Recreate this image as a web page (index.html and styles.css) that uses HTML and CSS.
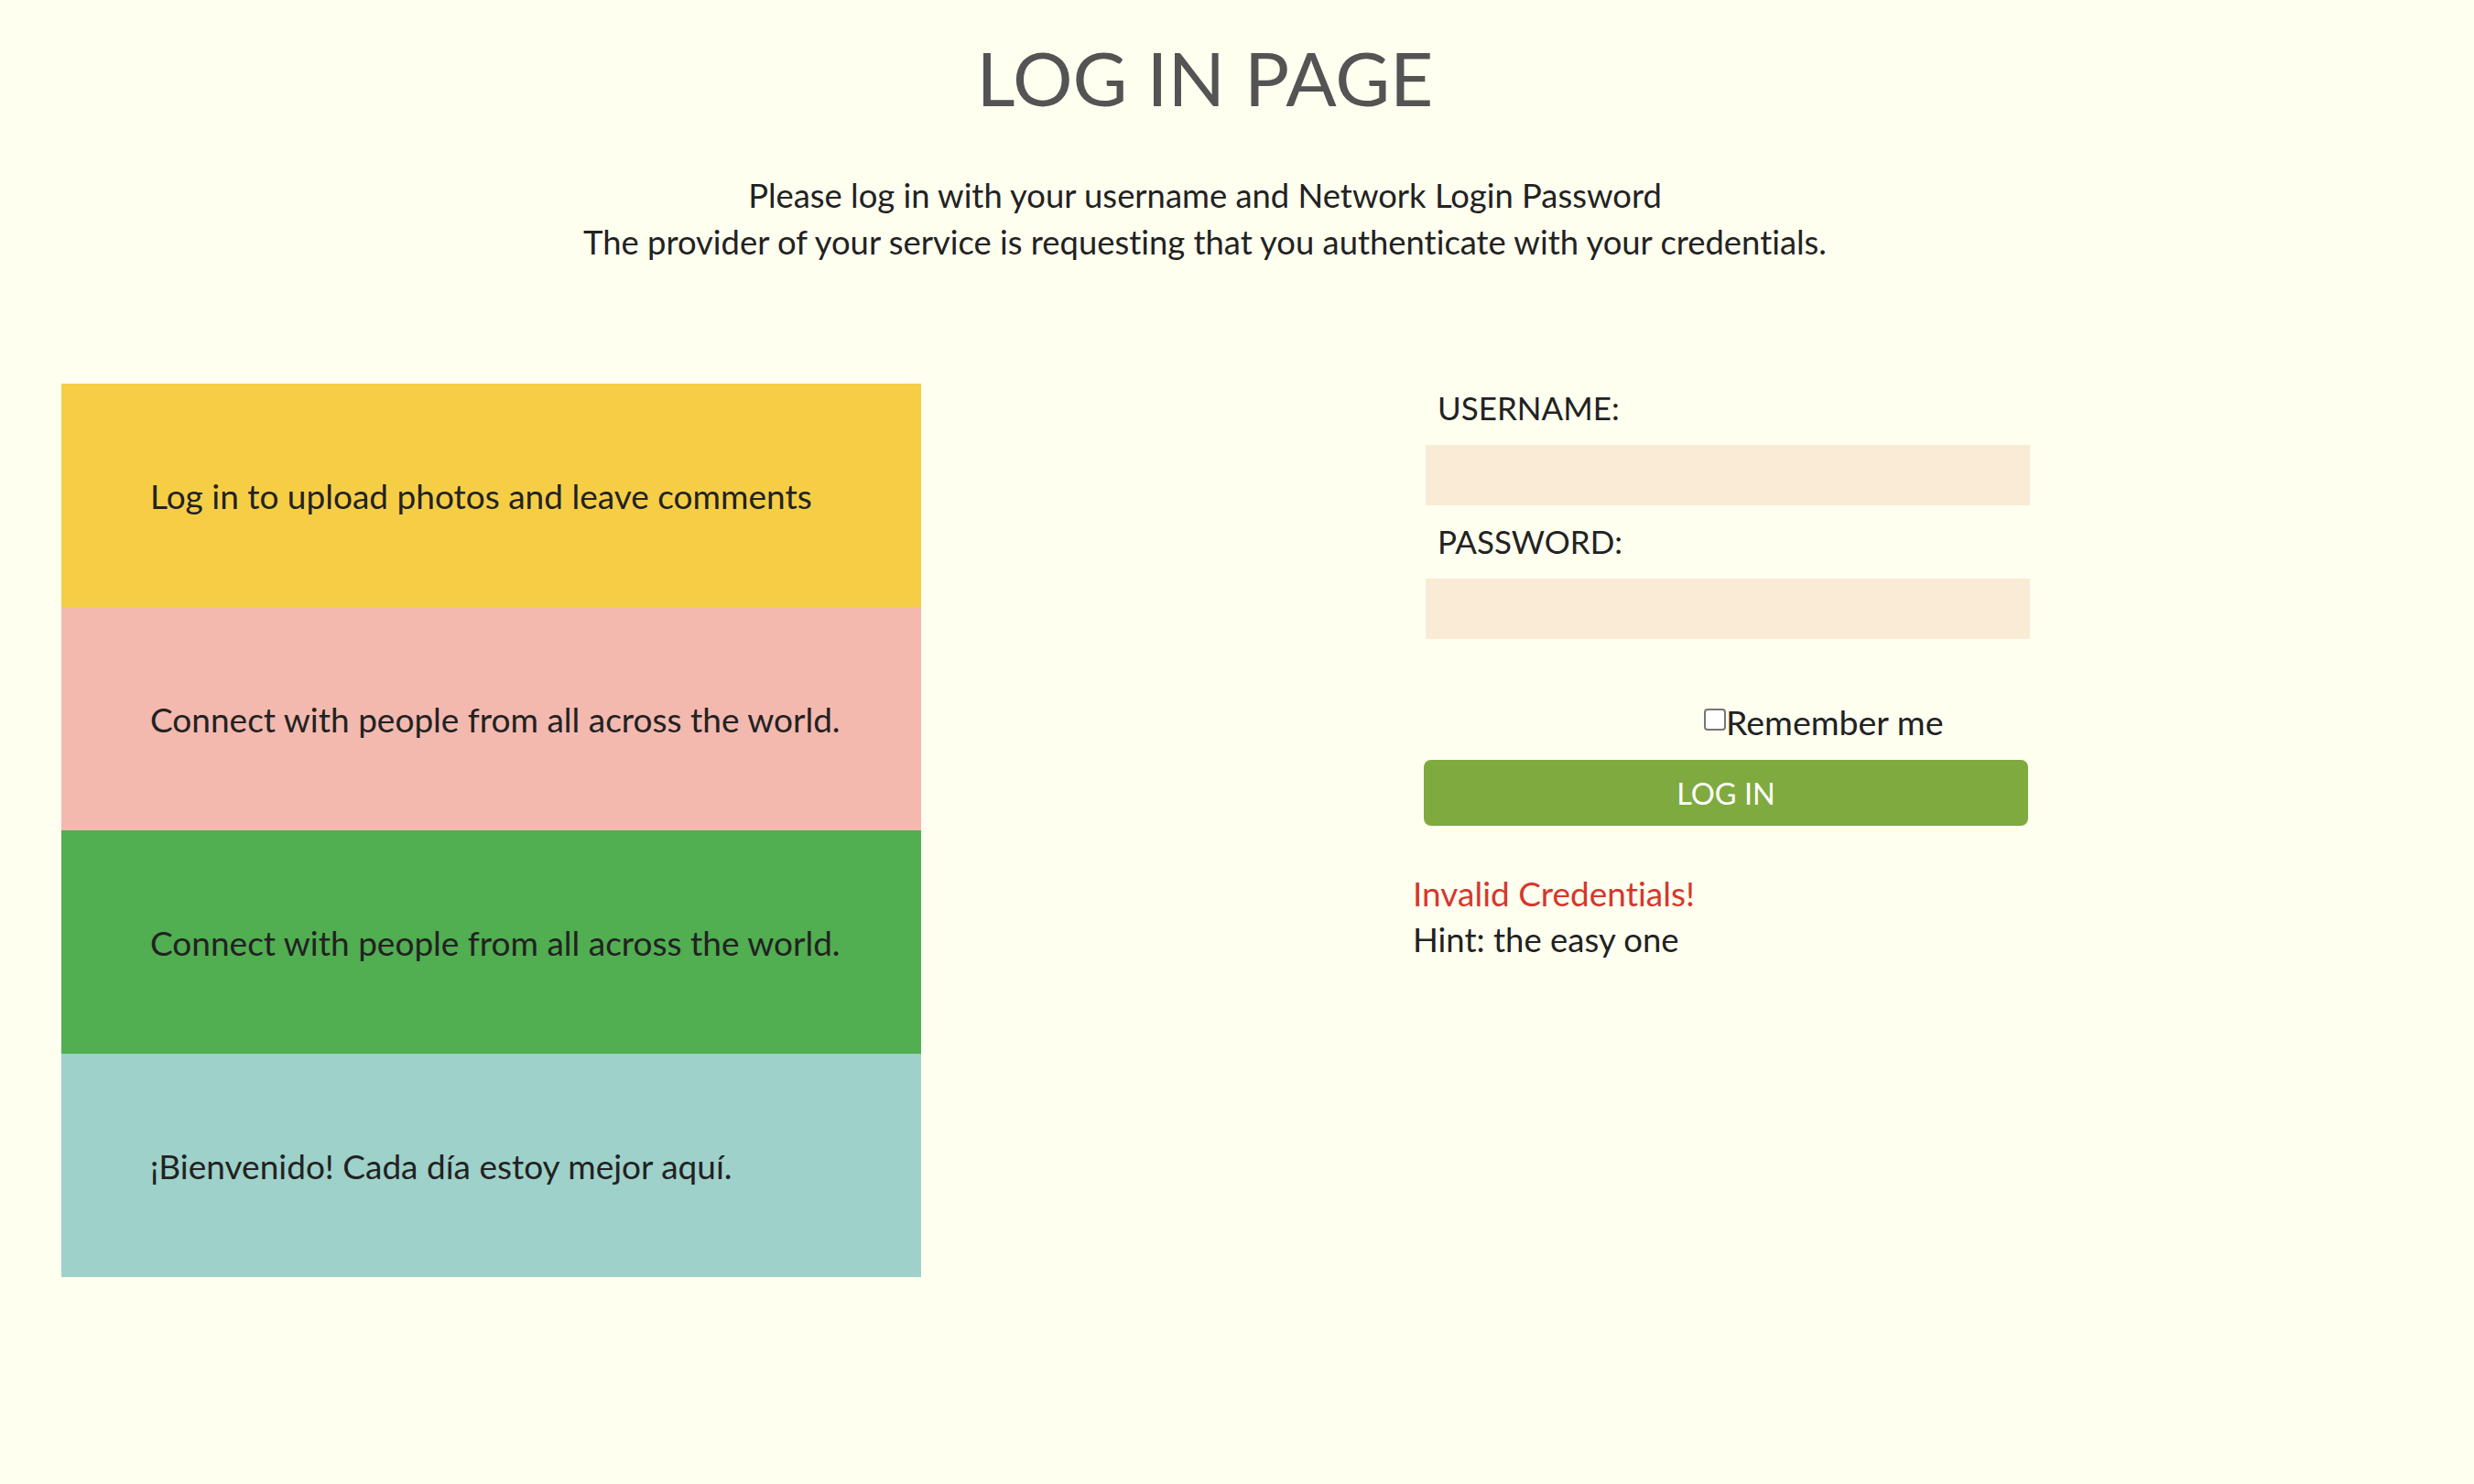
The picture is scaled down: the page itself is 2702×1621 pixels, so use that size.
FILE: index.html
```html
<!DOCTYPE html>
<html lang="en">
<head>
<meta charset="utf-8">
<title>Log In Page</title>
<link rel="stylesheet" href="styles.css">
</head>
<body>
  <header class="page-header">
    <h1 class="title">LOG IN PAGE</h1>
    <div class="intro">
      <p class="intro-line">Please log in with your username and Network Login Password</p>
      <p class="intro-line">The provider of your service is requesting that you authenticate with your credentials.</p>
    </div>
  </header>
  <main class="content">
    <section class="panels">
      <div class="panel panel-yellow"><span class="panel-text">Log in to upload photos and leave comments</span></div>
      <div class="panel panel-pink"><span class="panel-text">Connect with people from all across the world.</span></div>
      <div class="panel panel-green"><span class="panel-text">Connect with people from all across the world.</span></div>
      <div class="panel panel-teal"><span class="panel-text">¡Bienvenido! Cada día estoy mejor aquí.</span></div>
    </section>
    <section class="login">
      <form class="login-form">
        <label class="field-label" for="username">USERNAME:</label>
        <input class="field-input" id="username" type="text">
        <label class="field-label field-label-second" for="password">PASSWORD:</label>
        <input class="field-input" id="password" type="password">
        <div class="remember">
          <input class="remember-box" id="remember" type="checkbox">
          <label class="remember-text" for="remember">Remember me</label>
        </div>
        <button class="login-button" type="button">LOG IN</button>
      </form>
      <p class="message message-error">Invalid Credentials!</p>
      <p class="message">Hint: the easy one</p>
    </section>
  </main>
</body>
</html>
```

FILE: styles.css
```css
html, body {
  margin: 0;
  padding: 0;
}

body {
  background: #fffff0;
  font-family: "Lato", "Noto Sans", sans-serif;
  font-variant-ligatures: none;
  color: #222222;
}

.page-header {
  text-align: center;
  padding-right: 70px;
}

.title {
  margin: 36px 0 0;
  font-size: 82px;
  line-height: 96px;
  font-weight: 400;
  color: #545454;
}

.intro {
  margin-top: 56px;
}

.intro-line {
  margin: 0;
  font-size: 36.4px;
  line-height: 51px;
}

.content {
  display: flex;
  align-items: flex-start;
  padding-left: 67px;
  margin-top: 129px;
  gap: 537px;
}

.panels {
  width: 939px;
  display: flex;
  flex-direction: column;
}

.panel {
  height: 244px;
  display: flex;
  align-items: center;
  padding-left: 97px;
  font-size: 37px;
}

.panel-yellow { background: #f6ce46; }
.panel-pink { background: #f3b9af; }
.panel-green { background: #51ae51; }
.panel-teal { background: #9ed1ca; }

.login {
  width: 680px;
}

.login-form {
  display: flex;
  flex-direction: column;
  align-items: flex-start;
  padding-top: 6px;
}

.field-label {
  font-size: 35px;
  line-height: 40px;
  padding-left: 27px;
}

.field-label-second {
  margin-top: 19px;
}

.field-input {
  box-sizing: border-box;
  width: 660px;
  height: 66px;
  margin: 21px 0 0 14px;
  border: none;
  background: #faebd7;
  font-family: inherit;
  font-size: 30px;
  padding: 0 12px;
}

.remember {
  display: flex;
  align-items: flex-start;
  margin: 71px 0 0 318px;
  height: 40px;
}

.remember-box {
  appearance: none;
  box-sizing: border-box;
  width: 24px;
  height: 24px;
  margin: 5px 0 0;
  border: 2px solid #767676;
  border-radius: 4px;
  background: #ffffff;
}

.remember-text {
  font-size: 37.5px;
  line-height: 40px;
}

.login-button {
  box-sizing: border-box;
  width: 660px;
  height: 72px;
  margin: 21px 0 0 12px;
  border: none;
  border-radius: 8px;
  background: #7faa3f;
  color: #ffffff;
  font-family: inherit;
  font-size: 32.5px;
  padding: 0;
}

.message {
  margin: 0;
  font-size: 36.5px;
  line-height: 51px;
}

.message-error {
  margin-top: 48px;
  color: #d6372d;
  font-size: 37px;
}
```
